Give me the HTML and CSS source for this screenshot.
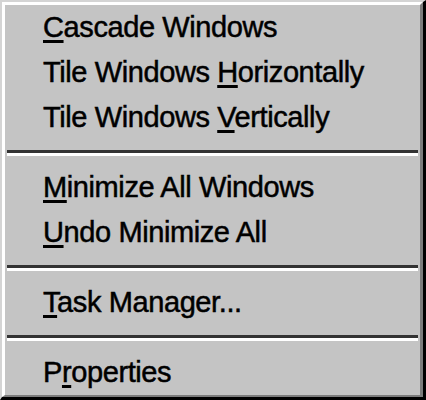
FILE: index.html
```html
<!DOCTYPE html>
<html>
<head>
<meta charset="utf-8">
<link rel="stylesheet" href="styles.css">
</head>
<body>
<div class="menu">
  <div class="outer">
    <ul class="items">
      <li class="item"><span class="key">C</span>ascade Windows</li>
      <li class="item">Tile Windows <span class="key">H</span>orizontally</li>
      <li class="item">Tile Windows <span class="key">V</span>ertically</li>
      <li class="sep"></li>
      <li class="item"><span class="key">M</span>inimize All Windows</li>
      <li class="item"><span class="key">U</span>ndo Minimize All</li>
      <li class="sep"></li>
      <li class="item"><span class="key">T</span>ask Manager...</li>
      <li class="sep"></li>
      <li class="item">P<span class="key">r</span>operties</li>
    </ul>
  </div>
</div>
</body>
</html>
```

FILE: styles.css
```css
html, body {
  margin: 0;
  padding: 0;
  background: #c4c4c4;
}

.menu {
  width: 426px;
  height: 400px;
  box-sizing: border-box;
  border-style: solid;
  border-width: 2px 3px 3px 2px;
  border-color: #d4d4d4 #000 #000 #d4d4d4;
}

.outer {
  height: 100%;
  box-sizing: border-box;
  border-style: solid;
  border-width: 3px 3px 2px 3px;
  border-color: #fff #7c7c7c #7c7c7c #fff;
  background: #c4c4c4;
}

.items {
  list-style: none;
  margin: 0;
  padding: 0;
}

.item {
  height: 45px;
  line-height: 45px;
  padding-left: 38px;
  font-family: "Liberation Sans", Arial, sans-serif;
  font-size: 29px;
  letter-spacing: -0.4px;
  color: #000;
  white-space: nowrap;
  -webkit-text-stroke: 0.5px #000;
}

.key {
  text-decoration: underline;
  text-decoration-thickness: 3px;
  text-underline-offset: 3px;
}

.sep {
  height: 25px;
  display: flex;
  flex-direction: column;
  justify-content: center;
  padding: 0 2px;
}

.sep::before {
  content: "";
  display: block;
  height: 3px;
  background: #333;
}

.sep::after {
  content: "";
  display: block;
  height: 3px;
  background: #fff;
}
```
